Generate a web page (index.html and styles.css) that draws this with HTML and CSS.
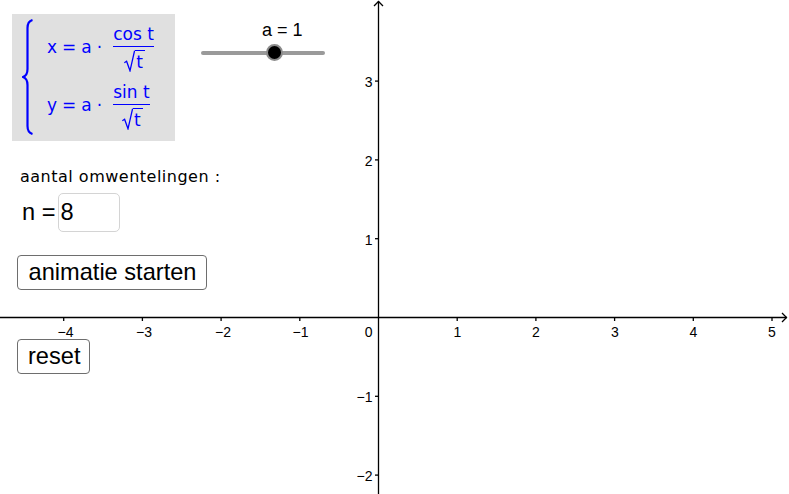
FILE: index.html
```html
<!DOCTYPE html>
<html>
<head>
<meta charset="utf-8">
<link rel="stylesheet" href="styles.css">
</head>
<body>
<div class="app">
  <svg class="graph" width="789" height="494" viewBox="0 0 789 494">
    <g stroke="#000" stroke-width="1.3" fill="none">
      <line x1="0" y1="317.5" x2="787" y2="317.5"/>
      <line x1="378.5" y1="1" x2="378.5" y2="494"/>
      <polyline points="374,6 378.5,1.5 383,6"/>
      <polyline points="782,313 786.5,317.5 782,322"/>
      <line x1="63.7" y1="317.5" x2="63.7" y2="321"/>
      <line x1="142.4" y1="317.5" x2="142.4" y2="321"/>
      <line x1="221.1" y1="317.5" x2="221.1" y2="321"/>
      <line x1="299.8" y1="317.5" x2="299.8" y2="321"/>
      <line x1="457.2" y1="317.5" x2="457.2" y2="321"/>
      <line x1="535.9" y1="317.5" x2="535.9" y2="321"/>
      <line x1="614.6" y1="317.5" x2="614.6" y2="321"/>
      <line x1="693.3" y1="317.5" x2="693.3" y2="321"/>
      <line x1="772" y1="317.5" x2="772" y2="321"/>
      <line x1="375" y1="81.1" x2="378.5" y2="81.1"/>
      <line x1="375" y1="159.9" x2="378.5" y2="159.9"/>
      <line x1="375" y1="238.7" x2="378.5" y2="238.7"/>
      <line x1="375" y1="396.3" x2="378.5" y2="396.3"/>
      <line x1="375" y1="475.1" x2="378.5" y2="475.1"/>
    </g>
    <g class="ticklabel" text-anchor="middle">
      <text x="65.5" y="337">−4</text>
      <text x="144" y="337">−3</text>
      <text x="223" y="337">−2</text>
      <text x="300.5" y="337">−1</text>
      <text x="457.5" y="337">1</text>
      <text x="536" y="337">2</text>
      <text x="615" y="337">3</text>
      <text x="693.5" y="337">4</text>
      <text x="772" y="337">5</text>
    </g>
    <g class="ticklabel" text-anchor="end">
      <text x="372.5" y="337">0</text>
      <text x="372.5" y="87">3</text>
      <text x="372.5" y="165.5">2</text>
      <text x="372.5" y="244.5">1</text>
      <text x="372.5" y="401.5">−1</text>
      <text x="372.5" y="481">−2</text>
    </g>
  </svg>

  <div class="panel">
    <div class="top-row">
      <div class="formula">
        <svg class="brace" width="12" height="116" viewBox="0 0 12 116">
          <path d="M10.5 1 C7 2 5.5 4.5 5.5 9 L5.5 50 C5.5 54.5 4 57 1 58 C4 59 5.5 61.5 5.5 66 L5.5 107 C5.5 111.5 7 114 10.5 115" fill="none" stroke="#0000ff" stroke-width="2.2"/>
        </svg>
        <div class="eqs">
          <div class="eq">
            <span class="lhs">x</span><span class="op">=</span><span class="var">a</span><span class="dot">·</span>
            <span class="frac">
              <span class="num">cos t</span>
              <span class="bar"></span>
              <span class="den">
                <svg class="rad" width="11" height="22" viewBox="0 0 11 22"><path d="M0.3 12.8 L2.6 11.3 L6 20.8 L10.6 0.7" fill="none" stroke="#0000ff" stroke-width="1.3"/></svg><span class="radicand">t</span>
              </span>
            </span>
          </div>
          <div class="eq">
            <span class="lhs">y</span><span class="op">=</span><span class="var">a</span><span class="dot">·</span>
            <span class="frac">
              <span class="num">sin t</span>
              <span class="bar"></span>
              <span class="den">
                <svg class="rad" width="11" height="22" viewBox="0 0 11 22"><path d="M0.3 12.8 L2.6 11.3 L6 20.8 L10.6 0.7" fill="none" stroke="#0000ff" stroke-width="1.3"/></svg><span class="radicand">t</span>
              </span>
            </span>
          </div>
        </div>
      </div>
      <div class="slider">
        <div class="slider-label">a = 1</div>
        <div class="track">
          <span class="knob"></span>
        </div>
      </div>
    </div>

    <div class="caption">aantal omwentelingen :</div>

    <div class="input-row">
      <span class="input-label">n =</span>
      <span class="input-box">8</span>
    </div>

    <button class="btn btn-start">animatie starten</button>
    <button class="btn btn-reset">reset</button>
  </div>
</div>
</body>
</html>
```

FILE: styles.css
```css
html, body {
  margin: 0;
  padding: 0;
  background: #fff;
}
.app {
  position: relative;
  width: 789px;
  height: 494px;
  overflow: hidden;
  font-family: "Liberation Sans", Arial, sans-serif;
}
.graph {
  position: absolute;
  left: 0;
  top: 0;
}
.ticklabel {
  font-family: "Liberation Sans", Arial, sans-serif;
  font-size: 14px;
  fill: #000;
}
.panel {
  position: absolute;
  left: 0;
  top: 0;
  padding: 14px 0 0 12px;
  display: flex;
  flex-direction: column;
  align-items: flex-start;
}
.top-row {
  display: flex;
  align-items: flex-start;
}
.formula {
  width: 163px;
  height: 127px;
  box-sizing: border-box;
  background: #e0e0e0;
  display: flex;
  align-items: flex-start;
  padding: 5px 0 0 10px;
  color: #0000ff;
  font-family: "DejaVu Sans", sans-serif;
  font-size: 17px;
}
.brace {
  display: block;
  flex: none;
}
.eqs {
  display: flex;
  flex-direction: column;
  margin-left: 13px;
  margin-top: -2px;
}
.eq {
  height: 58px;
  display: flex;
  align-items: center;
  white-space: nowrap;
}
.lhs, .var, .op, .dot {
  line-height: 1;
  position: relative;
  top: 1px;
}
.op {
  margin: 0 5px 0 5px;
}
.dot {
  margin: 0 10px 0 5px;
}
.frac {
  display: inline-flex;
  flex-direction: column;
  align-items: center;
  padding: 0 1px;
  position: relative;
  top: 3px;
}
.num {
  line-height: 17px;
  padding-bottom: 3px;
}
.bar {
  align-self: stretch;
  height: 1.3px;
  background: #0000ff;
}
.den {
  display: flex;
  align-items: flex-start;
  padding-top: 3px;
  margin-left: 2px;
}
.rad {
  display: block;
  flex: none;
}
.radicand {
  border-top: 1.3px solid #0000ff;
  margin-top: 0.1px;
  height: 21px;
  line-height: 22px;
  padding: 0 2px 0 1px;
}
.slider {
  margin-left: 26px;
  margin-top: 6px;
  width: 124px;
}
.slider-label {
  font-size: 18px;
  line-height: 20px;
  padding-left: 61px;
  color: #000;
}
.track {
  position: relative;
  margin-top: 11px;
  height: 4px;
  border-radius: 2px;
  background: #9a9a9a;
}
.knob {
  position: absolute;
  left: 65px;
  top: -7px;
  width: 13px;
  height: 13px;
  border-radius: 50%;
  background: #000;
  border: 2.5px solid #8c8c8c;
}
.caption {
  margin: 26px 0 0 8px;
  font-family: "DejaVu Sans", sans-serif;
  font-size: 16px;
  letter-spacing: 0.5px;
  line-height: 19px;
  color: #000;
}
.input-row {
  display: flex;
  align-items: center;
  margin: 7px 0 0 10px;
  height: 39px;
  font-size: 23.6px;
}
.input-label {
  margin-right: 3px;
}
.input-box {
  box-sizing: border-box;
  width: 62px;
  height: 39px;
  border: 1px solid #d4d4d4;
  border-radius: 5px;
  padding-left: 1px;
  display: flex;
  align-items: center;
}
.btn {
  box-sizing: border-box;
  height: 35px;
  margin-left: 5px;
  padding: 0 9px 0 10px;
  border: 1px solid #6e6e6e;
  border-radius: 4px;
  background: #fff;
  font-family: "Liberation Sans", Arial, sans-serif;
  font-size: 23.6px;
  line-height: 33px;
  color: #000;
}
.btn-start {
  margin-top: 23px;
  width: 190px;
}
.btn-reset {
  margin-top: 49px;
  width: 73px;
}
```
